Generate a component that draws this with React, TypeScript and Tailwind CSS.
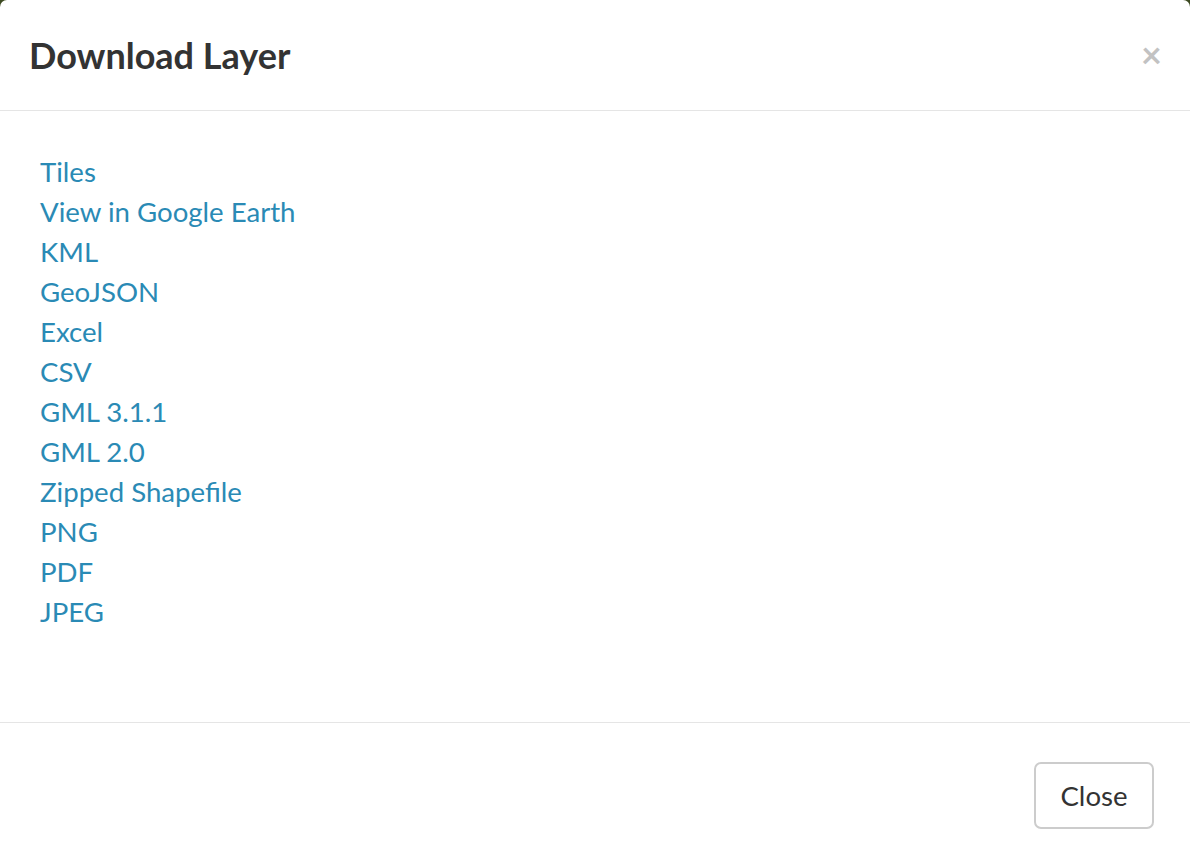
import React from "react";

const links = [
  "Tiles",
  "View in Google Earth",
  "KML",
  "GeoJSON",
  "Excel",
  "CSV",
  "GML 3.1.1",
  "GML 2.0",
  "Zipped Shapefile",
  "PNG",
  "PDF",
  "JPEG",
];

export default function App() {
  return (
    <div
      className="w-[1190px] h-[868px] bg-[#3d4a22] overflow-hidden"
      style={{ fontFamily: "Lato, 'Open Sans', sans-serif" }}
    >
      <div className="w-full h-full bg-white rounded-t-[7px] flex flex-col">
        <div className="h-[111px] border-b border-[#e5e5e5] flex items-center justify-between pl-[29px] pr-[28px]">
          <h4 className="text-[36px] font-bold text-[#333333] leading-none">Download Layer</h4>
          <button className="text-[#c2c2c2] text-[36px] font-bold leading-none -mt-[2px]">×</button>
        </div>
        <div className="h-[611px] pt-[41px] pl-[40px]">
          {links.map((l) => (
            <div key={l} className="h-[40px] leading-[40px] text-[27.6px] text-[#2a8ab5]">
              <a href="#">{l}</a>
            </div>
          ))}
        </div>
        <div className="flex-1 border-t border-[#e5e5e5] flex items-center justify-end pr-[36px]">
          <button className="w-[120px] h-[67px] border-2 border-[#cccccc] rounded-[7px] text-[27.6px] text-[#333333] bg-white">
            Close
          </button>
        </div>
      </div>
    </div>
  );
}
